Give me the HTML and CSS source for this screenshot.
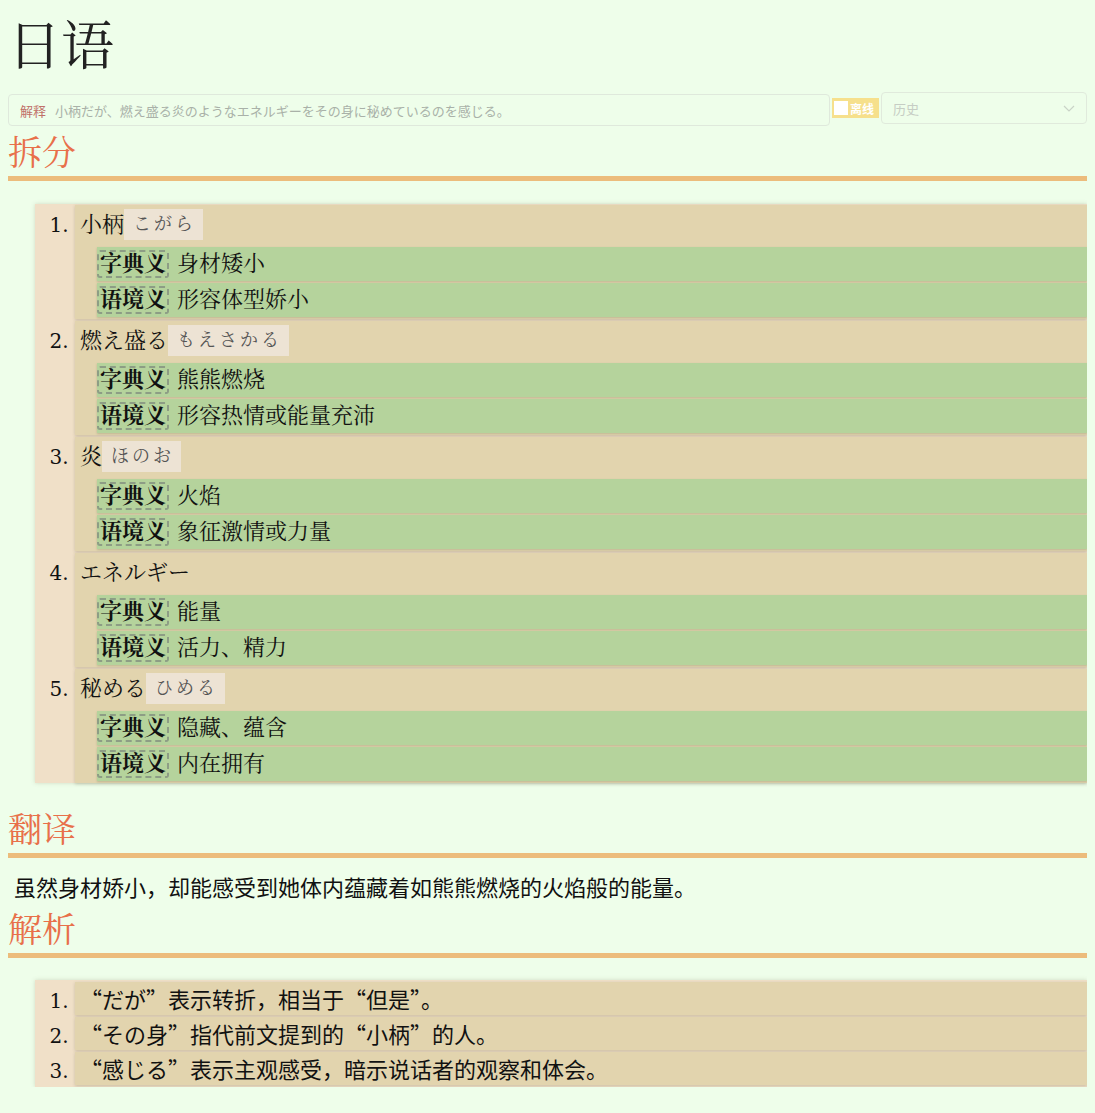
FILE: index.html
```html
<!DOCTYPE html>
<html lang="zh-CN">
<head>
<meta charset="utf-8">
<title>日语</title>
<link rel="stylesheet" href="styles.css">
</head>
<body>
<h1 class="title">日语</h1>
<div class="toolbar">
  <div class="input">
    <span class="input-label">解释</span>
    <span class="placeholder">小柄だが、燃え盛る炎のようなエネルギーをその身に秘めているのを感じる。</span>
  </div>
  <label class="offline"><span class="check"></span>离线</label>
  <div class="select">
    <span class="select-text">历史</span>
    <svg class="chevron" width="12" height="7" viewBox="0 0 12 7"><path d="M1 1 L6 6 L11 1" fill="none" stroke="#c9d3c7" stroke-width="1.2"/></svg>
  </div>
</div>

<h2 class="section">拆分</h2>
<ol class="words">
  <li>
    <div class="head"><span class="word">小柄</span><span class="reading">こがら</span></div>
    <div class="meaning"><span class="tag">字典义</span>身材矮小</div>
    <div class="meaning"><span class="tag">语境义</span>形容体型娇小</div>
  </li>
  <li>
    <div class="head"><span class="word">燃え盛る</span><span class="reading">もえさかる</span></div>
    <div class="meaning"><span class="tag">字典义</span>熊熊燃烧</div>
    <div class="meaning"><span class="tag">语境义</span>形容热情或能量充沛</div>
  </li>
  <li>
    <div class="head"><span class="word">炎</span><span class="reading">ほのお</span></div>
    <div class="meaning"><span class="tag">字典义</span>火焰</div>
    <div class="meaning"><span class="tag">语境义</span>象征激情或力量</div>
  </li>
  <li>
    <div class="head"><span class="word">エネルギー</span></div>
    <div class="meaning"><span class="tag">字典义</span>能量</div>
    <div class="meaning"><span class="tag">语境义</span>活力、精力</div>
  </li>
  <li>
    <div class="head"><span class="word">秘める</span><span class="reading">ひめる</span></div>
    <div class="meaning"><span class="tag">字典义</span>隐藏、蕴含</div>
    <div class="meaning"><span class="tag">语境义</span>内在拥有</div>
  </li>
</ol>

<h2 class="section section-gap">翻译</h2>
<p class="translation">虽然身材娇小，却能感受到她体内蕴藏着如熊熊燃烧的火焰般的能量。</p>

<h2 class="section section-tight">解析</h2>
<ol class="notes">
  <li>“だが”表示转折，相当于“但是”。</li>
  <li>“その身”指代前文提到的“小柄”的人。</li>
  <li>“感じる”表示主观感受，暗示说话者的观察和体会。</li>
</ol>
</body>
</html>
```

FILE: styles.css
```css
html, body {
  background: #eefeea;
}
body {
  margin: 8px;
  font-family: "Liberation Serif", "Noto Serif CJK SC", "Noto Sans CJK SC", serif;
  color: #111;
}

.title {
  margin: 9px 0 15px 0;
  padding-left: 0;
  font-size: 53px;
  line-height: 60px;
  font-weight: normal;
  color: #222;
}

.toolbar {
  display: flex;
  align-items: flex-start;
  gap: 2px;
}
.input {
  box-sizing: border-box;
  width: 822px;
  height: 32px;
  margin-top: 2px;
  border: 1px solid #dfe9dc;
  border-radius: 4px;
  display: flex;
  align-items: center;
  padding-left: 11px;
  font-family: "Noto Sans CJK SC", sans-serif;
  font-size: 13px;
}
.input-label {
  color: #c07068;
  margin-right: 9px;
}
.placeholder {
  color: #a9b1a8;
}
.offline {
  margin-top: 6px;
  height: 20px;
  width: 47px;
  box-sizing: border-box;
  background: #f6e08c;
  display: flex;
  align-items: center;
  padding-left: 2px;
  gap: 2px;
  font-family: "Noto Sans CJK SC", sans-serif;
  font-size: 12px;
  font-weight: bold;
  color: #fff;
}
.check {
  width: 14px;
  height: 14px;
  background: #fff;
}
.select {
  box-sizing: border-box;
  width: 206px;
  height: 32px;
  border: 1px solid #e0eadc;
  border-radius: 4px;
  display: flex;
  align-items: center;
  justify-content: space-between;
  padding: 0 11px 0 11px;
  font-family: "Noto Sans CJK SC", sans-serif;
  font-size: 13px;
  color: #c6cdc4;
}

.section {
  margin: 6px 0 0 0;
  padding-bottom: 0;
  border-bottom: 5px solid #ecbc7c;
  font-size: 34px;
  line-height: 44px;
  font-weight: normal;
  color: #e8704a;
}
.section-gap {
  margin-top: 26px;
}

.words, .notes {
  margin: 23px 0 0 27px;
  padding: 1px 0 0 40px;
  background: #f0e0c8;
  box-shadow: 0 0 4px rgba(120, 110, 80, 0.25);
  font-size: 22px;
}
.words li::marker, .notes li::marker {
  font-family: "DejaVu Serif", serif;
  font-size: 20px;
}
.words li, .notes li {
  background: #e2d4ae;
  box-shadow: 0 1px 3px rgba(90, 80, 50, 0.25);
  margin-bottom: 2px;
}
.words li:last-child, .notes li:last-child {
  margin-bottom: 0;
}
.words li {
  padding: 4px 0 2px 5px;
}
.head {
  height: 31px;
  line-height: 31px;
  margin-bottom: 7px;
}
.word {
  font-size: 22px;
  vertical-align: top;
}
.reading {
  display: inline-block;
  vertical-align: top;
  height: 31px;
  line-height: 31px;
  padding: 0 7px 0 9px;
  background: #ede3d4;
  color: #555;
  font-size: 18px;
  letter-spacing: 3px;
}
.meaning {
  margin-left: 17px;
  height: 34px;
  box-sizing: border-box;
  padding-top: 3px;
  margin-bottom: 2px;
  background: #b5d39c;
  box-shadow: 0 1px 2px rgba(80, 90, 60, 0.25);
  line-height: 28px;
}
.meaning:last-child {
  margin-bottom: 0;
}
.tag {
  display: inline-block;
  vertical-align: top;
  height: 28px;
  box-sizing: border-box;
  line-height: 24px;
  padding: 0 1px;
  margin-right: 8px;
  border: 2px dashed #8d9d85;
  border-radius: 3px;
  font-weight: bold;
}

.translation {
  margin: 13px 0 0 0;
  padding-left: 6px;
  font-family: "Noto Sans CJK SC", sans-serif;
  font-size: 22px;
  line-height: 30px;
}
.section-tight {
  margin-top: 8px;
}

.notes {
  margin-top: 22px;
  padding-top: 2px;
  padding-bottom: 2px;
}
.notes li {
  height: 33px;
  line-height: 33px;
  padding-left: 5px;
  font-family: "Noto Sans CJK SC", sans-serif;
}
```
